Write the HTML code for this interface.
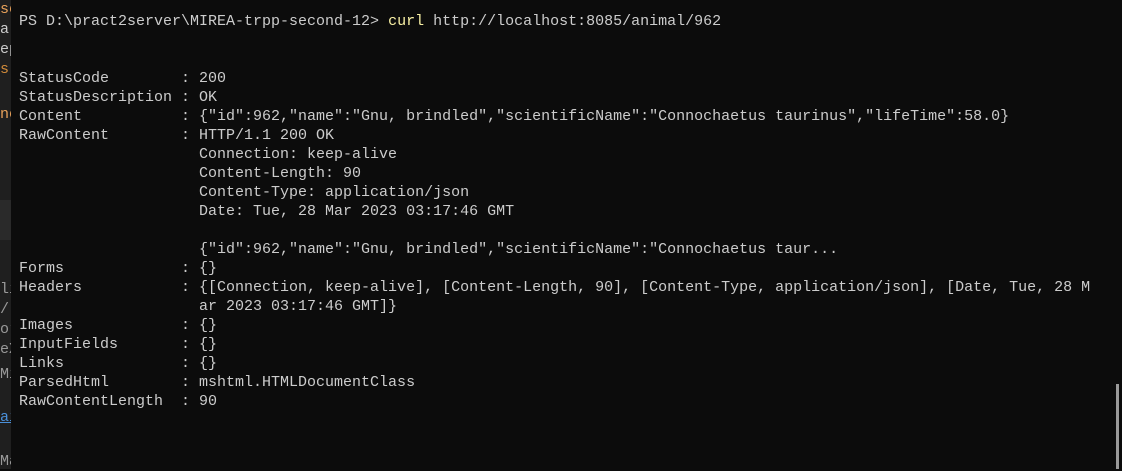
<!DOCTYPE html>
<html><head><style>
body{margin:0;width:1122px;height:469px;background:#0c0c0c;overflow:hidden;position:relative}
#strip{position:absolute;left:0;top:0;width:11px;height:469px;background:#1f1f1f}
pre{position:absolute;left:19px;top:12px;margin:0;font-family:"Liberation Mono",monospace;font-size:15px;line-height:19px;color:#cccccc;letter-spacing:0px}
.y{color:#f9f1a5}
.sb{position:absolute;left:1116px;top:384px;width:3px;height:85px;background:#9a9a9a}
.s{position:absolute;left:0;width:11px;font-family:"Liberation Mono",monospace;font-size:15px;line-height:19px;overflow:hidden;white-space:nowrap}
</style></head><body>
<div id="strip"></div>
<div class="s" style="top:0;color:#e8a15a">se</div>
<div class="s" style="top:20px;color:#ccc">a</div>
<div class="s" style="top:40px;color:#ccc">ep</div>
<div class="s" style="top:60px;color:#d08a3a">s</div>
<div class="s" style="top:105px;color:#e8a15a">ne</div>
<div style="position:absolute;left:0;top:200px;width:11px;height:40px;background:#2a2a2a"></div>
<div class="s" style="top:280px;color:#999">li</div>
<div class="s" style="top:300px;color:#999">/</div>
<div class="s" style="top:320px;color:#999">or</div>
<div class="s" style="top:340px;color:#999">eX</div>
<div class="s" style="top:365px;color:#999">Mi</div>
<div class="s" style="top:408px;color:#4a8fd8;text-decoration:underline">ai</div>
<div class="s" style="top:452px;color:#999">Ma</div>
<pre>PS D:\pract2server\MIREA-trpp-second-12&gt; <span class="y">curl</span> http://localhost:8085/animal/962


StatusCode        : 200
StatusDescription : OK
Content           : {"id":962,"name":"Gnu, brindled","scientificName":"Connochaetus taurinus","lifeTime":58.0}
RawContent        : HTTP/1.1 200 OK
                    Connection: keep-alive
                    Content-Length: 90
                    Content-Type: application/json
                    Date: Tue, 28 Mar 2023 03:17:46 GMT

                    {"id":962,"name":"Gnu, brindled","scientificName":"Connochaetus taur...
Forms             : {}
Headers           : {[Connection, keep-alive], [Content-Length, 90], [Content-Type, application/json], [Date, Tue, 28 M
                    ar 2023 03:17:46 GMT]}
Images            : {}
InputFields       : {}
Links             : {}
ParsedHtml        : mshtml.HTMLDocumentClass
RawContentLength  : 90</pre>
<div class="sb"></div>
</body></html>
